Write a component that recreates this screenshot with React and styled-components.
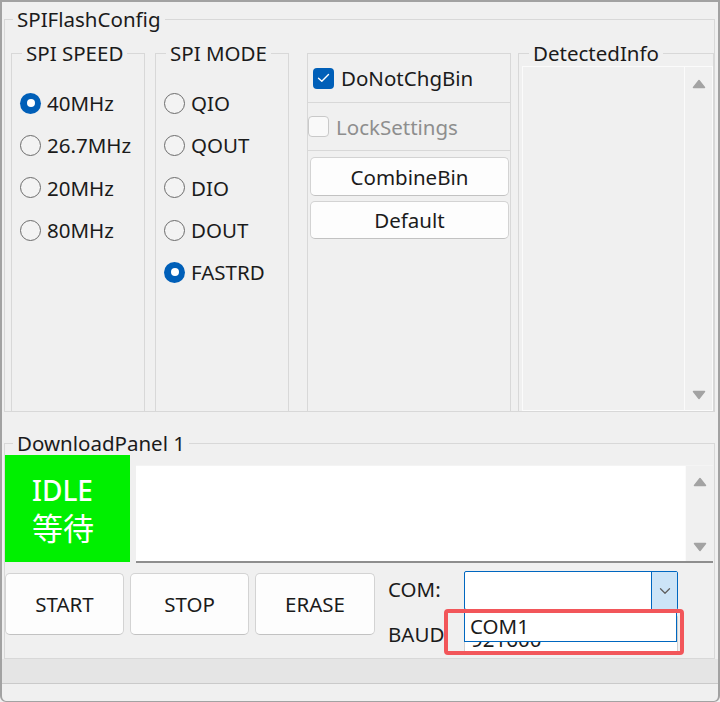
import React from 'react';
import styled, { createGlobalStyle } from 'styled-components';

const GlobalStyle = createGlobalStyle`
  html, body {
    margin: 0;
    padding: 0;
    background: #f0f0f0;
  }
  body {
    font-family: "Noto Sans", "Noto Sans CJK SC", sans-serif;
    font-size: 20.5px;
    color: #1b1b1b;
  }
  * {
    box-sizing: border-box;
  }
`;

const Window = styled.div`
  position: relative;
  width: 720px;
  height: 702px;
  border: 2px solid #a2a2a2;
  border-bottom-width: 1px;
  border-radius: 0 0 6px 6px;
  padding: 6px 3px 0 2px;
  display: flex;
  flex-direction: column;
  overflow: hidden;
`;

const Group = styled.fieldset`
  margin: ${p => p.$margin || '0'};
  padding: 0;
  min-width: 0;
  flex: none;
  border: 1px solid #d8d8d8;
  ${p => p.$open && 'border-bottom: none;'}
  height: ${p => p.$height}px;
  width: ${p => (p.$width ? p.$width + 'px' : 'auto')};
`;

const Legend = styled.legend`
  margin-left: ${p => p.$indent || 10}px;
  padding: 0 4px;
  line-height: 22px;
`;

const ConfigRow = styled.div`
  display: flex;
  padding: 12px 0 0 6px;
  height: 381px;
`;

const RadioList = styled.div`
  display: flex;
  flex-direction: column;
  padding: 18px 0 0 8px;
`;

const RadioRow = styled.label`
  display: flex;
  align-items: center;
  gap: 6px;
  height: 42.3px;
  line-height: 22px;
`;

const RadioDot = styled.span`
  width: 21px;
  height: 21px;
  border-radius: 50%;
  flex: none;
  border: ${p => (p.$on ? 'none' : '1.5px solid #6c6c6c')};
  background: ${p => (p.$on ? '#005fb8' : '#f3f3f3')};
  display: flex;
  align-items: center;
  justify-content: center;
  &::after {
    content: '';
    display: ${p => (p.$on ? 'block' : 'none')};
    width: 8px;
    height: 8px;
    border-radius: 50%;
    background: #fff;
  }
`;

const MidPanel = styled.div`
  width: 204px;
  margin: 11px 0 0 18px;
  border: 1px solid #d8d8d8;
  border-bottom: none;
  display: flex;
  flex-direction: column;
`;

const CheckRow = styled.label`
  display: flex;
  align-items: center;
  gap: 7px;
  height: ${p => p.$h}px;
  padding-left: ${p => p.$indent}px;
  color: ${p => (p.$disabled ? '#8e8e8e' : '#1b1b1b')};
  line-height: 22px;
`;

const LockBox = styled.div`
  border-top: 1px solid #d8d8d8;
  border-bottom: 1px solid #d8d8d8;
`;

const Box = styled.span`
  width: 21px;
  height: 21px;
  flex: none;
  border-radius: 4px;
  background: ${p => (p.$on ? '#005fb8' : '#f9f9f9')};
  border: ${p => (p.$on ? 'none' : '1px solid #c9c9c9')};
  display: flex;
  align-items: center;
  justify-content: center;
`;

const Button = styled.button`
  font-family: inherit;
  font-size: 20.5px;
  color: #1b1b1b;
  background: #fdfdfd;
  border: 1px solid #d3d3d3;
  border-bottom-color: #c2c2c2;
  border-radius: 5px;
  padding: 0;
  height: ${p => p.$h}px;
  width: ${p => (p.$w ? p.$w + 'px' : 'auto')};
  margin: ${p => p.$margin || '0'};
  line-height: 22px;
`;

const ListBox = styled.div`
  margin: 2px 0 0 3px;
  height: 345px;
  border: 1px solid #fbfbfb;
  background: #f0f0f0;
  display: flex;
`;

const ListBody = styled.div`
  flex: 1;
  background: ${p => p.$bg || 'transparent'};
`;

const Scroll = styled.div`
  width: 28px;
  flex: none;
  background: #f0f0f0;
  border-left: 1px solid #fbfbfb;
  display: flex;
  flex-direction: column;
  justify-content: space-between;
  align-items: center;
  padding: ${p => p.$pad};
`;

const DownloadBody = styled.div`
  display: flex;
  flex-direction: column;
  padding-top: 1px;
`;

const TopRow = styled.div`
  display: flex;
  align-items: flex-start;
`;

const Status = styled.div`
  width: 125px;
  height: 107px;
  background: #00f000;
  color: #fff;
  padding: 18px 0 0 27px;
  display: flex;
  flex-direction: column;
`;

const StatusEn = styled.span`
  font-size: 28px;
  line-height: 34px;
  font-weight: 500;
`;

const StatusCn = styled.span`
  font-family: "Noto Sans CJK SC", sans-serif;
  font-size: 31px;
  line-height: 40px;
`;

const LogArea = styled.div`
  margin: 10px 0 0 6px;
  width: 577px;
  height: 98px;
  background: #fff;
  border-top: 1px solid #f4f4f4;
  border-bottom: 2px solid #8e8e8e;
  display: flex;
`;

const BottomRow = styled.div`
  display: flex;
  margin-top: 10px;
  gap: 6px;
`;

const PortGrid = styled.div`
  display: grid;
  grid-template-columns: 76px 214px;
  grid-template-rows: 39px 38px;
  row-gap: 5px;
  margin: -2px 0 0 7px;
`;

const PortLabel = styled.span`
  display: flex;
  align-items: center;
  line-height: 22px;
  padding-bottom: ${p => p.$lift || 0}px;
`;

const ComboWrap = styled.div`
  position: relative;
`;

const Combo = styled.div`
  height: 100%;
  display: flex;
  background: #fff;
  border: 1px solid ${p => (p.$active ? '#0067c0' : '#cfcfcf')};
  border-radius: 2px;
`;

const ComboText = styled.span`
  flex: 1;
  padding: ${p => p.$pad || '0 6px'};
  line-height: 22px;
`;

const ComboBtn = styled.span`
  width: 26px;
  flex: none;
  background: ${p => (p.$active ? '#cce4f7' : 'transparent')};
  border-left: 1px solid ${p => (p.$active ? '#0067c0' : 'transparent')};
  display: flex;
  align-items: center;
  justify-content: center;
`;

const DropList = styled.div`
  position: absolute;
  left: 0;
  top: 100%;
  width: 213px;
  height: 32px;
  background: #fff;
  border: 1px solid #0067c0;
  border-top: none;
  padding-left: 5px;
  display: flex;
  align-items: center;
  line-height: 22px;
  z-index: 2;
`;

const Highlight = styled.div`
  position: absolute;
  left: -20px;
  top: 38px;
  width: 240px;
  height: 46px;
  border: 4px solid #f2565a;
  border-radius: 4px;
  z-index: 3;
`;

const StatusBar = styled.div`
  margin: 0 -3px 0 -2px;
  height: 25px;
  flex: none;
  background: #e5e5e5;
  border-bottom: 1px solid #cacaca;
`;

const Arrow = ({ up }) => (
  <svg width="14" height="10" viewBox="0 0 14 10">
    <polygon
      points={up ? '7,1.5 12.5,8.5 1.5,8.5' : '1.5,1.5 12.5,1.5 7,8.5'}
      fill="#a3a3a3"
      stroke="#a3a3a3"
      strokeWidth="1.5"
      strokeLinejoin="round"
    />
  </svg>
);

const speeds = ['40MHz', '26.7MHz', '20MHz', '80MHz'];
const modes = ['QIO', 'QOUT', 'DIO', 'DOUT', 'FASTRD'];

const App = () => {
  return (
    <>
      <GlobalStyle />
      <Window>
        <Group $height={404}>
          <Legend $indent={8}>SPIFlashConfig</Legend>
          <ConfigRow>
            <Group $width={134} $height={369} $open>
              <Legend>SPI SPEED</Legend>
              <RadioList>
                {speeds.map(s => (
                  <RadioRow key={s}>
                    <RadioDot $on={s === '40MHz'} />
                    {s}
                  </RadioRow>
                ))}
              </RadioList>
            </Group>
            <Group $width={134} $height={369} $margin="0 0 0 10px" $open>
              <Legend>SPI MODE</Legend>
              <RadioList>
                {modes.map(m => (
                  <RadioRow key={m}>
                    <RadioDot $on={m === 'FASTRD'} />
                    {m}
                  </RadioRow>
                ))}
              </RadioList>
            </Group>
            <MidPanel>
              <CheckRow $h={48} $indent={5}>
                <Box $on>
                  <svg width="13" height="10" viewBox="0 0 13 10">
                    <path d="M1.5 5.2 L4.8 8.3 L11.5 1.6" fill="none" stroke="#fff" strokeWidth="1.4" strokeLinecap="round" strokeLinejoin="round" />
                  </svg>
                </Box>
                DoNotChgBin
              </CheckRow>
              <LockBox>
                <CheckRow $h={47} $indent={0} $disabled>
                  <Box />
                  LockSettings
                </CheckRow>
              </LockBox>
              <Button $h={39} $margin="6px 1px 0 2px">CombineBin</Button>
              <Button $h={38} $margin="5px 1px 0 2px">Default</Button>
            </MidPanel>
            <Group $width={196} $height={369} $margin="0 0 0 7px" $open>
              <Legend>DetectedInfo</Legend>
              <ListBox>
                <ListBody />
                <Scroll $pad="12px 0 10px">
                  <Arrow up />
                  <Arrow />
                </Scroll>
              </ListBox>
            </Group>
          </ConfigRow>
        </Group>

        <Group $height={227} $margin="20px 0 0 0">
          <Legend $indent={8}>DownloadPanel 1</Legend>
          <DownloadBody>
            <TopRow>
              <Status>
                <StatusEn>IDLE</StatusEn>
                <StatusCn>等待</StatusCn>
              </Status>
              <LogArea>
                <ListBody $bg="#fff" />
                <Scroll $pad="11px 0 9px">
                  <Arrow up />
                  <Arrow />
                </Scroll>
              </LogArea>
            </TopRow>
            <BottomRow>
              <Button $w={119} $h={62}>START</Button>
              <Button $w={119} $h={62}>STOP</Button>
              <Button $w={120} $h={62}>ERASE</Button>
              <PortGrid>
                <PortLabel $lift={4}>COM:</PortLabel>
                <ComboWrap>
                  <Combo $active>
                    <ComboText />
                    <ComboBtn $active>
                      <svg width="12" height="8" viewBox="0 0 12 8">
                        <path d="M1.5 1.8 L6 6.2 L10.5 1.8" fill="none" stroke="#606060" strokeWidth="1.3" strokeLinecap="round" strokeLinejoin="round" />
                      </svg>
                    </ComboBtn>
                  </Combo>
                  <DropList>COM1</DropList>
                  <Highlight />
                </ComboWrap>
                <PortLabel>BAUD</PortLabel>
                <Combo>
                  <ComboText $pad="12px 6px 0">921600</ComboText>
                </Combo>
              </PortGrid>
            </BottomRow>
          </DownloadBody>
        </Group>
        <StatusBar />
      </Window>
    </>
  );
};

export default App;
